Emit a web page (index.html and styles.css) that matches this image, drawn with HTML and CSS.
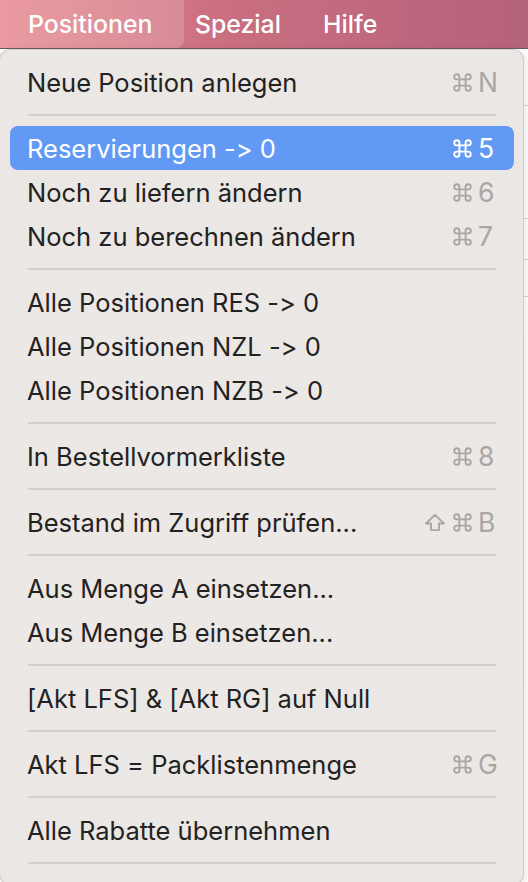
FILE: index.html
```html
<!DOCTYPE html>
<html lang="de">
<head>
<meta charset="utf-8">
<title>Positionen</title>
<link rel="stylesheet" href="styles.css">
</head>
<body>
<div class="menubar">
  <div class="mb-item active">Positionen</div>
  <div class="mb-item second">Spezial</div>
  <div class="mb-item">Hilfe</div>
</div>
<div class="window">
  <div class="win-row r1"></div>
  <div class="win-row r2"></div>
  <div class="win-row r3"></div>
  <div class="win-row r4"></div>
</div>

<svg width="0" height="0" class="defs">
  <defs>
    <symbol id="cmd" viewBox="0 0 16 16">
      <path d="M5.4 5.4V3.2A2.2 2.2 0 1 0 3.2 5.4H12.8A2.2 2.2 0 1 0 10.6 3.2V12.8A2.2 2.2 0 1 0 12.8 10.6H3.2A2.2 2.2 0 1 0 5.4 12.8Z" fill="none" stroke="currentColor" stroke-width="1.6" stroke-linejoin="round"/>
    </symbol>
    <symbol id="shift" viewBox="0 0 18 16">
      <path d="M9 1.6L16.6 8.8H12.4V14.4H5.6V8.8H1.4Z" fill="none" stroke="currentColor" stroke-width="1.6" stroke-linejoin="round"/>
    </symbol>
  </defs>
</svg>

<div class="menu">
  <div class="item"><span class="label">Neue Position anlegen</span><span class="keys"><svg class="ico"><use href="#cmd"/></svg><span class="key">N</span></span></div>
  <div class="sep"></div>
  <div class="item selected"><span class="label">Reservierungen -&gt; 0</span><span class="keys"><svg class="ico"><use href="#cmd"/></svg><span class="key">5</span></span></div>
  <div class="item"><span class="label">Noch zu liefern ändern</span><span class="keys"><svg class="ico"><use href="#cmd"/></svg><span class="key">6</span></span></div>
  <div class="item"><span class="label">Noch zu berechnen ändern</span><span class="keys"><svg class="ico"><use href="#cmd"/></svg><span class="key">7</span></span></div>
  <div class="sep"></div>
  <div class="item"><span class="label">Alle Positionen RES -&gt; 0</span></div>
  <div class="item"><span class="label">Alle Positionen NZL -&gt; 0</span></div>
  <div class="item"><span class="label">Alle Positionen NZB -&gt; 0</span></div>
  <div class="sep"></div>
  <div class="item"><span class="label">In Bestellvormerkliste</span><span class="keys"><svg class="ico"><use href="#cmd"/></svg><span class="key">8</span></span></div>
  <div class="sep"></div>
  <div class="item"><span class="label">Bestand im Zugriff prüfen...</span><span class="keys"><svg class="ico shift"><use href="#shift"/></svg><svg class="ico"><use href="#cmd"/></svg><span class="key">B</span></span></div>
  <div class="sep"></div>
  <div class="item"><span class="label">Aus Menge A einsetzen...</span></div>
  <div class="item"><span class="label">Aus Menge B einsetzen...</span></div>
  <div class="sep"></div>
  <div class="item"><span class="label">[Akt LFS] &amp; [Akt RG] auf Null</span></div>
  <div class="sep"></div>
  <div class="item"><span class="label">Akt LFS = Packlistenmenge</span><span class="keys"><svg class="ico"><use href="#cmd"/></svg><span class="key">G</span></span></div>
  <div class="sep"></div>
  <div class="item"><span class="label">Alle Rabatte übernehmen</span></div>
  <div class="sep"></div>
</div>
</body>
</html>
```
FILE: styles.css
```css
html, body {
  margin: 0;
  padding: 0;
}
body {
  width: 528px;
  height: 882px;
  overflow: hidden;
  position: relative;
  background: #f7f7f7;
  font-family: Inter, "Noto Sans", "Liberation Sans", sans-serif;
  font-variant-ligatures: none;
  font-feature-settings: "calt" 0, "liga" 0;
}
.defs {
  position: absolute;
  width: 0;
  height: 0;
}
.menubar {
  height: 48px;
  display: flex;
  align-items: stretch;
  background: linear-gradient(90deg, #e6848b 0%, #c96e80 45%, #b5627c 100%);
  border-bottom: 1px solid #6d5a60;
}
.mb-item {
  display: flex;
  align-items: center;
  padding: 0 21px 1px 21px;
  font-size: 24.8px;
  font-weight: 500;
  color: #ffffff;
}
.mb-item.active {
  width: 184px;
  box-sizing: border-box;
  padding-left: 28px;
  background: rgba(255, 255, 255, 0.18);
  border-radius: 0 0 8px 0;
}
.mb-item.second {
  padding-left: 11px;
}
.window {
  height: 833px;
  background: #ffffff;
  display: flex;
  flex-direction: column;
}
.win-row {
  border-bottom: 1px solid #d6d6d6;
}
.r1 { height: 56px; }
.r2 { height: 112px; }
.r3 { height: 40px; }
.r4 { height: 36px; }
.menu {
  position: absolute;
  left: -1px;
  top: 49px;
  width: 525px;
  box-sizing: border-box;
  padding: 10px 0 10px 0;
  background: linear-gradient(180deg, #ebe7e4 0%, #ece8e5 60%, #ebe7e4 100%);
  border: 1px solid #cfcac7;
  border-top-color: #d8d3d0;
  border-radius: 11px;
  box-shadow: 1px 3px 10px rgba(0, 0, 0, 0.12);
}
.item {
  height: 44px;
  margin: 0 9px 0 10px;
  padding: 0 14px 0 17px;
  display: flex;
  align-items: center;
  justify-content: space-between;
  border-radius: 8px;
  font-size: 25.5px;
  color: #232222;
}
.item.selected {
  background: #6299f4;
  color: #ffffff;
}
.keys {
  display: flex;
  align-items: center;
  color: #a9a6a4;
}
.item.selected .keys {
  color: #ffffff;
}
.ico {
  width: 19px;
  height: 19px;
}
.ico.shift {
  width: 22px;
  margin-right: 7px;
}
.key {
  width: 22px;
  margin-left: 6px;
  text-align: left;
  font-size: 26.5px;
  font-weight: 400;
}
.sep {
  height: 22px;
  display: flex;
  align-items: center;
  margin: 0 27px 0 28px;
}
.sep::before {
  content: "";
  flex: 1;
  height: 2px;
  background: #d3cfcc;
}
```
